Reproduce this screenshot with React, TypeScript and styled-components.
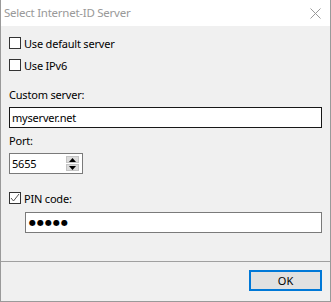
import React from "react";
import styled, { createGlobalStyle } from "styled-components";

const Global = createGlobalStyle`
  html, body { margin: 0; padding: 0; background: #f0f0f0; }
  body {
    font-family: "Noto Sans", "Segoe UI", sans-serif;
    font-size: 11px;
    letter-spacing: -0.2px;
    color: #000;
  }
`;

const Window = styled.div`
  width: 331px;
  height: 302px;
  box-sizing: border-box;
  border-left: 1px solid #9a9a9a;
  border-right: 1px solid #9a9a9a;
  border-bottom: 1px solid #9a9a9a;
  background: #f0f0f0;
  display: flex;
  flex-direction: column;
  overflow: hidden;
`;

const TitleBar = styled.div`
  height: 26px;
  background: #fff;
  display: flex;
  align-items: center;
  justify-content: space-between;
  padding-left: 3px;
  padding-right: 9px;
`;

const Title = styled.span`
  font-size: 11.5px;
  letter-spacing: -0.25px;
  color: #999;
  line-height: 26px;
`;

const Content = styled.div`
  display: flex;
  flex-direction: column;
  padding: 8px 8px 0 8px;
`;

const CheckRow = styled.label<{ $mt?: number }>`
  display: flex;
  align-items: center;
  height: 18px;
  margin-top: ${(p) => p.$mt ?? 0}px;
  gap: 3px;
`;

const Box = styled.span`
  width: 12px;
  height: 12px;
  box-sizing: border-box;
  border: 1px solid #333;
  background: #fff;
  display: flex;
  align-items: center;
  justify-content: center;
`;

const Label = styled.div<{ $mt: number }>`
  line-height: 16px;
  margin-top: ${(p) => p.$mt}px;
`;

const Field = styled.div<{ $mt: number; $w?: number; $ml?: number; $dark?: boolean }>`
  margin-top: ${(p) => p.$mt}px;
  margin-left: ${(p) => p.$ml ?? 0}px;
  width: ${(p) => (p.$w ? `${p.$w}px` : "auto")};
  height: 21px;
  box-sizing: border-box;
  border: 1px solid ${(p) => (p.$dark ? "#171717" : "#7a7a7a")};
  background: #fff;
  display: flex;
  align-items: center;
  padding-left: 2px;
`;

const FieldText = styled.span`
  flex: 1;
  line-height: 19px;
`;

const Dots = styled.span`
  font-family: "DejaVu Sans", sans-serif;
  font-size: 8px;
  letter-spacing: 1px;
  line-height: 19px;
  padding-left: 1px;
`;

const Spin = styled.div`
  display: flex;
  flex-direction: column;
  gap: 1px;
  margin-right: 3px;
`;

const SpinBtn = styled.div`
  width: 13px;
  height: 7px;
  box-sizing: border-box;
  background: #dcdcdc;
  border: 1px solid #c4c4c4;
  display: flex;
  align-items: center;
  justify-content: center;
`;

const Separator = styled.div`
  margin-top: 28px;
  height: 1px;
  background: #a0a0a0;
`;

const Footer = styled.div`
  display: flex;
  justify-content: flex-end;
  padding: 8px 8px 0 8px;
`;

const Button = styled.button`
  width: 73px;
  height: 21px;
  box-sizing: border-box;
  border: 2px solid #0078d7;
  background: #e1e1e1;
  font-family: "Noto Sans", sans-serif;
  font-size: 11px;
  color: #000;
  padding: 0;
  line-height: 17px;
`;

const Check = () => (
  <svg width="10" height="10" viewBox="0 0 10 10">
    <polyline points="1,5 3.5,8 9,1" fill="none" stroke="#555" strokeWidth="1" />
  </svg>
);

const Close = () => (
  <svg width="11" height="11" viewBox="0 0 11 11">
    <line x1="0.5" y1="0.5" x2="10.5" y2="10.5" stroke="#999" strokeWidth="1" />
    <line x1="10.5" y1="0.5" x2="0.5" y2="10.5" stroke="#999" strokeWidth="1" />
  </svg>
);

const Tri = ({ up }: { up?: boolean }) => (
  <svg width="7" height="4" viewBox="0 0 7 4">
    <polygon points={up ? "3.5,0 7,4 0,4" : "0,0 7,0 3.5,4"} fill="#000" />
  </svg>
);

export default function App() {
  return (
    <>
      <Global />
      <Window>
        <TitleBar>
          <Title>Select Internet-ID Server</Title>
          <Close />
        </TitleBar>
        <Content>
          <CheckRow>
            <Box />
            <span>Use default server</span>
          </CheckRow>
          <CheckRow $mt={4}>
            <Box />
            <span>Use IPv6</span>
          </CheckRow>
          <Label $mt={13}>Custom server:</Label>
          <Field $mt={4} $dark>
            <FieldText>myserver.net</FieldText>
          </Field>
          <Label $mt={5}>Port:</Label>
          <Field $mt={4} $w={74}>
            <FieldText>5655</FieldText>
            <Spin>
              <SpinBtn>
                <Tri up />
              </SpinBtn>
              <SpinBtn>
                <Tri />
              </SpinBtn>
            </Spin>
          </Field>
          <CheckRow $mt={15}>
            <Box>
              <Check />
            </Box>
            <span>PIN code:</span>
          </CheckRow>
          <Field $mt={5} $ml={16}>
            <Dots>●●●●●</Dots>
          </Field>
        </Content>
        <Separator />
        <Footer>
          <Button>OK</Button>
        </Footer>
      </Window>
    </>
  );
}
